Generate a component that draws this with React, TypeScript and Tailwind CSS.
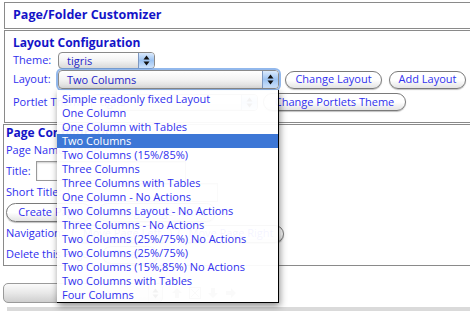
import clsx from "clsx";

// Mac "aqua" style customizer page with the layout dropdown open

const layouts = [
  "Simple readonly fixed Layout",
  "One Column",
  "One Column with Tables",
  "Two Columns",
  "Two Columns (15%/85%)",
  "Three Columns",
  "Three Columns with Tables",
  "One Column - No Actions",
  "Two Columns Layout - No Actions",
  "Three Columns - No Actions",
  "Two Columns (25%/75%) No Actions",
  "Two Columns (25%/75%)",
  "Two Columns (15%,85%) No Actions",
  "Two Columns with Tables",
  "Four Columns",
];

function Arrows() {
  return (
    <svg width="7" height="11" viewBox="0 0 7 11">
      <path d="M3.5 0.5 L6.5 4.5 L0.5 4.5 Z" fill="#111" />
      <path d="M3.5 10.5 L6.5 6.5 L0.5 6.5 Z" fill="#111" />
    </svg>
  );
}

function AquaSelect({
  value,
  className,
  focused,
}: {
  value: string;
  className: string;
  focused?: boolean;
}) {
  return (
    <div
      className={clsx(
        "flex items-stretch overflow-hidden rounded-[4px] border border-[#8a8a8a] bg-linear-to-b from-white via-[#f3f3f3] to-[#d9d9d9]",
        focused && "shadow-[0_0_0_2px_rgba(110,160,230,0.75)] border-[#6a8fc8]",
        className
      )}
    >
      <span className="flex-1 self-center whitespace-nowrap pl-[8px] leading-[14px] text-[#2424c8]">{value}</span>
      <span className="flex w-[16px] items-center justify-center border-l border-[#7d97c0] bg-linear-to-b from-[#dbeafc] via-[#9cc3f2] to-[#cfe3fb]">
        <Arrows />
      </span>
    </div>
  );
}

function AquaButton({ label, className }: { label: string; className: string }) {
  return (
    <div
      className={clsx(
        "flex items-center justify-center whitespace-nowrap rounded-full border border-[#7a7a7a] bg-linear-to-b from-white via-white to-[#e4e4e4] shadow-[0_1px_1px_rgba(0,0,0,0.25)]",
        className
      )}
    >
      {label}
    </div>
  );
}

export default function App() {
  return (
    <div className="relative h-[311px] w-[470px] overflow-hidden bg-white font-['Open_Sans',sans-serif] text-[11px] text-[#3030ee]">
      <div className="pl-[4px] pt-[2px]">
        {/* header box */}
        <div className="flex h-[27px] items-center border-y border-l border-[#8a8a8a] pl-[8px] text-[12.5px] font-bold text-[#1414c8]">
          Page/Folder Customizer
        </div>

        {/* layout configuration */}
        <div className="mt-[1px] flex h-[93px] flex-col border-y border-l border-[#8a8a8a] pl-[8px] pt-[4px]">
          <div className="h-[15px] text-[12px] font-bold leading-[15px] text-[#1414c8]">Layout Configuration</div>
          <div className="mt-[2px] flex h-[17px] items-center">
            <span className="w-[45px]">Theme:</span>
            <AquaSelect value="tigris" className="h-[17px] w-[97px]" />
          </div>
          <div className="mt-[1px] flex h-[19px] items-center">
            <span className="w-[45px]">Layout:</span>
            <AquaSelect value="Two Columns" focused className="h-[19px] w-[221px]" />
            <AquaButton label="Change Layout" className="ml-[6px] h-[18px] w-[97px]" />
            <AquaButton label="Add Layout" className="ml-[7px] h-[18px] w-[77px]" />
          </div>
          <div className="mt-[4px] flex h-[18px] items-center">
            <span className="w-[78px] whitespace-nowrap">Portlet Theme:</span>
            <AquaSelect value="tigris" className="h-[17px] w-[167px]" />
            <AquaButton label="Change Portlets Theme" className="ml-[5px] h-[18px] w-[143px]" />
          </div>
        </div>

        {/* page configuration */}
        <div className="-ml-[1px] mt-[1px] flex h-[142px] flex-col border-y border-l border-[#8a8a8a] pl-[2px]">
          <div className="h-[15px] text-[12px] font-bold leading-[15px] text-[#1414c8]">Page Configuration</div>
          <div className="flex h-[20px] items-center">Page Name: home</div>
          <div className="flex h-[22px] items-center">
            <span className="w-[30px]">Title:</span>
            <div className="h-[20px] w-[150px] border border-[#9a9a9a] shadow-[inset_0_1px_2px_rgba(0,0,0,0.2)]" />
          </div>
          <div className="flex h-[20px] items-center">
            <span className="w-[62px]">Short Title:</span>
            <div className="h-[19px] w-[150px] border border-[#9a9a9a] shadow-[inset_0_1px_2px_rgba(0,0,0,0.2)]" />
          </div>
          <div className="flex h-[21px] items-center gap-[6px]">
            <AquaButton label="Create Page" className="h-[19px] w-[86px]" />
            <AquaButton label="Change Page Name" className="h-[19px] w-[118px]" />
          </div>
          <div className="flex h-[21px] items-center">
            <span className="w-[66px]">Navigation:</span>
            <AquaButton label="Move Page Left" className="h-[18px] w-[100px]" />
            <AquaButton label="Move Page Right" className="ml-[6px] h-[18px] w-[106px]" />
          </div>
          <div className="flex h-[21px] items-center">
            <span className="w-[96px]">Delete this Page:</span>
            <AquaButton label="Delete" className="h-[18px] w-[56px]" />
          </div>
        </div>
      </div>

      {/* fragment row */}
      <div className="mt-[17px] flex h-[20px] items-center pl-[3px]">
        <div className="flex h-[20px] w-[160px] items-stretch overflow-hidden rounded-[5px] border border-[#9a9a9a] bg-linear-to-b from-[#fafafa] via-[#e8e8e8] to-[#cfcfcf]">
          <span className="flex-1" />
          <span className="flex w-[14px] items-center justify-center border-l border-[#aaa]">
            <Arrows />
          </span>
        </div>
        <div className="ml-[8px] flex items-center gap-[6px] text-[#9a9a9a]">
          <svg width="12" height="12" viewBox="0 0 12 12"><path d="M6 1 L11 6 H8 V11 H4 V6 H1 Z" fill="currentColor" /></svg>
          <svg width="12" height="12" viewBox="0 0 12 12"><rect x="0.5" y="0.5" width="11" height="11" fill="none" stroke="currentColor" /><path d="M2 2 L10 10 M10 2 L2 10" stroke="currentColor" /></svg>
          <svg width="12" height="12" viewBox="0 0 12 12"><path d="M6 11 L11 6 H8 V1 H4 V6 H1 Z" fill="currentColor" /></svg>
          <svg width="12" height="12" viewBox="0 0 12 12"><path d="M11 6 L6 1 V4 H1 V8 H6 V11 Z" fill="currentColor" /></svg>
        </div>
      </div>
      <div className="ml-[7px] mt-[4px] h-[6px] bg-[#dadada]" />

      {/* open dropdown menu */}
      <div className="absolute left-[57px] top-[90px] h-[213px] w-[222px] border-b border-r border-black bg-white/95 pt-[2px] shadow-[1px_3px_7px_rgba(0,0,0,0.45)]">
        {layouts.map((l) => (
          <div
            key={l}
            className={clsx(
              "flex h-[14px] items-center whitespace-nowrap pl-[5px]",
              l === "Two Columns" ? "bg-[#3d77d6] text-white" : ""
            )}
          >
            {l}
          </div>
        ))}
      </div>
    </div>
  );
}
